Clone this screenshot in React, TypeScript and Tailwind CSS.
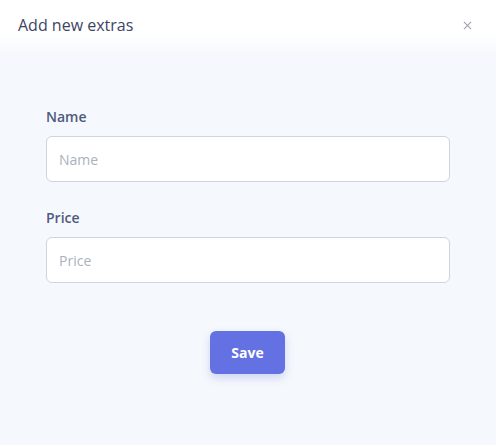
import React from 'react';

function Field({ label, placeholder }: { label: string; placeholder: string }) {
  return (
    <div className="flex flex-col">
      <label className="text-[14px] leading-[20px] font-semibold text-[#4f5a7c] mb-[9px]">{label}</label>
      <input
        type="text"
        placeholder={placeholder}
        className="w-full h-[46px] px-[12px] rounded-[6px] bg-white border border-[#cfd5de] text-[14px] text-[#3d4465] placeholder-[#aab2bd] focus:outline-none"
      />
    </div>
  );
}

export default function App() {
  return (
    <div className="w-[496px] h-[445px] bg-[#f5f8fc] flex flex-col" style={{ fontFamily: '"Open Sans", "Noto Sans", sans-serif' }}>
      <div className="h-[56px] flex items-start justify-between pl-[18px] pr-[24px] pt-[13px] bg-linear-to-b from-white from-60% to-[#f5f8fc]">
        <h2 className="text-[16px] leading-[24px] text-[#3d4465]">Add new extras</h2>
        <button className="text-[#9aa1ad] mt-[8px]">
          <svg width="9" height="9" viewBox="0 0 10 10" fill="none" stroke="currentColor" strokeWidth="1.2">
            <path d="M1 1L9 9M9 1L1 9" />
          </svg>
        </button>
      </div>
      <div className="flex flex-col px-[46px] pt-[51px]">
        <div className="flex flex-col gap-[26px]">
          <Field label="Name" placeholder="Name" />
          <Field label="Price" placeholder="Price" />
        </div>
        <div className="flex justify-center mt-[48px] pr-[1px]">
          <button className="w-[75px] h-[43px] rounded-[6px] bg-[#6371e3] text-white text-[14px] font-bold shadow-[0_4px_8px_rgba(99,113,227,0.25)]">
            Save
          </button>
        </div>
      </div>
    </div>
  );
}
